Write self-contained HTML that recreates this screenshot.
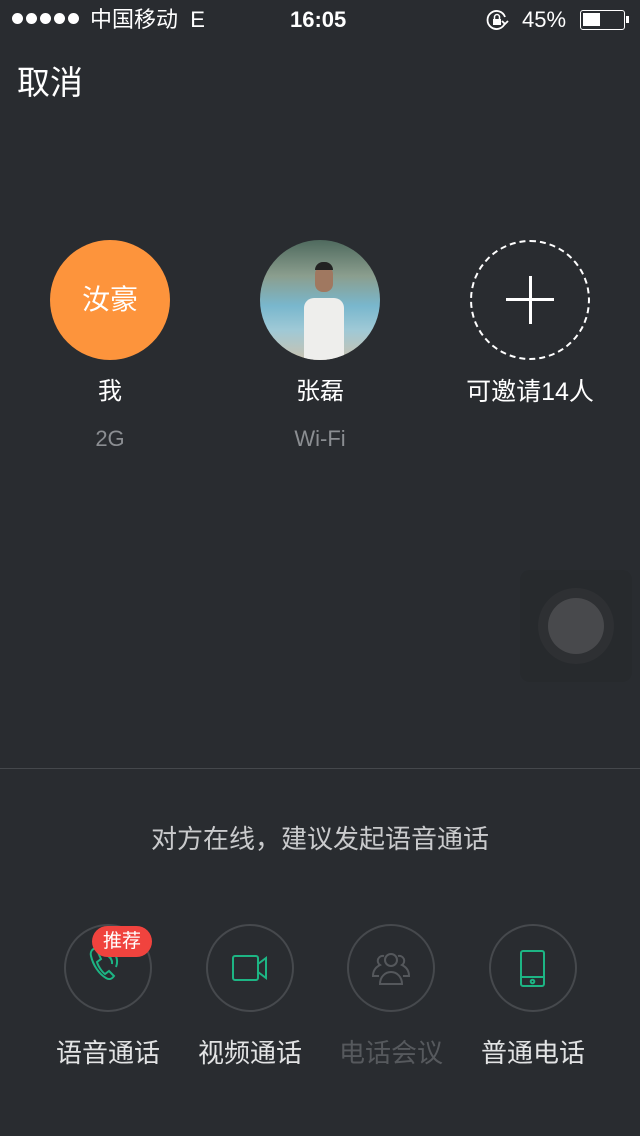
<!DOCTYPE html>
<html><head><meta charset="utf-8"><style>
*{margin:0;padding:0;box-sizing:border-box}
body{width:640px;height:1136px;background:#292c30;position:relative;overflow:hidden;font-family:"Liberation Sans","Noto Sans CJK SC",sans-serif;color:#fff}
.a{position:absolute}
.c{text-align:center}
</style></head><body>
<div class="a" style="left:12px;top:13px;display:flex;gap:3px">
<i style="width:11px;height:11px;border-radius:50%;background:#fff"></i><i style="width:11px;height:11px;border-radius:50%;background:#fff"></i><i style="width:11px;height:11px;border-radius:50%;background:#fff"></i><i style="width:11px;height:11px;border-radius:50%;background:#fff"></i><i style="width:11px;height:11px;border-radius:50%;background:#fff"></i></div>
<div class="a" style="left:90px;top:6px;font-size:22px;line-height:28px">中国移动&nbsp;&nbsp;E</div>
<div class="a" style="left:290px;top:6px;font-size:22px;line-height:28px;font-weight:bold">16:05</div>
<svg class="a" style="left:486px;top:9px" width="24" height="22" viewBox="0 0 24 22"><path d="M19 8A9 9 0 1 0 19 14" fill="none" stroke="#fff" stroke-width="1.8"/><path d="M16 12l3 3 3-3" fill="none" stroke="#fff" stroke-width="1.8"/><rect x="7" y="10" width="8" height="6" fill="#fff"/><path d="M8.5 10V8a2.5 2.5 0 0 1 5 0v2" fill="none" stroke="#fff" stroke-width="1.5"/></svg>
<div class="a" style="left:522px;top:6px;font-size:22px;line-height:28px">45%</div>
<div class="a" style="left:580px;top:10px;width:45px;height:20px;border:1.5px solid #fff;border-radius:3px"><div style="margin:2px;width:17px;height:13px;background:#fff"></div></div>
<div class="a" style="left:626px;top:16px;width:3px;height:7px;background:#fff"></div>

<div class="a" style="left:17px;top:61px;font-size:33px;line-height:44px">取消</div>

<div class="a c" style="left:50px;top:240px;width:120px;height:120px;border-radius:50%;background:#fd943c;font-size:28px;line-height:120px">汝豪</div>
<div class="a" style="left:260px;top:240px;width:120px;height:120px;border-radius:50%;overflow:hidden;background:linear-gradient(#4f6a5e 0%,#8b9e8e 30%,#79b7cd 55%,#9fc9d6 75%,#c9c2b0 100%)">
<div class="a" style="left:44px;top:58px;width:40px;height:62px;background:#eeeeec;border-radius:10px 10px 0 0"></div>
<div class="a" style="left:55px;top:26px;width:18px;height:26px;background:#a07860;border-radius:8px"></div>
<div class="a" style="left:55px;top:22px;width:18px;height:8px;background:#222;border-radius:8px 8px 0 0"></div>
</div>
<div class="a" style="left:470px;top:240px;width:120px;height:120px;border-radius:50%;border:2px dashed #fff"></div>
<div class="a" style="left:506px;top:298px;width:48px;height:3px;background:#fff"></div>
<div class="a" style="left:529px;top:276px;width:3px;height:48px;background:#fff"></div>

<div class="a c" style="left:10px;top:376px;width:200px;font-size:24px;line-height:32px">我</div>
<div class="a c" style="left:10px;top:424px;width:200px;font-size:22px;line-height:30px;color:#8b8e92">2G</div>
<div class="a c" style="left:220px;top:376px;width:200px;font-size:24px;line-height:32px">张磊</div>
<div class="a c" style="left:220px;top:424px;width:200px;font-size:22px;line-height:30px;color:#8b8e92">Wi-Fi</div>
<div class="a c" style="left:420px;top:376px;width:220px;font-size:25px;line-height:32px">可邀请14人</div>

<div class="a" style="left:520px;top:570px;width:112px;height:112px;border-radius:10px;background:#272a2d"></div>
<div class="a" style="left:538px;top:588px;width:76px;height:76px;border-radius:50%;background:#2e3033"></div>
<div class="a" style="left:548px;top:598px;width:56px;height:56px;border-radius:50%;background:#48494c"></div>

<div class="a" style="left:0;top:768px;width:640px;height:1px;background:#45484c"></div>
<div class="a c" style="left:0;top:821px;width:640px;font-size:26px;line-height:36px;color:#c9cacc">对方在线，建议发起语音通话</div>

<div class="a" style="left:64px;top:924px;width:88px;height:88px;border-radius:50%;border:2px solid #46494d"></div>
<div class="a" style="left:206px;top:924px;width:88px;height:88px;border-radius:50%;border:2px solid #46494d"></div>
<div class="a" style="left:347px;top:924px;width:88px;height:88px;border-radius:50%;border:2px solid #46494d"></div>
<div class="a" style="left:489px;top:924px;width:88px;height:88px;border-radius:50%;border:2px solid #46494d"></div>

<svg class="a" style="left:84px;top:944px" width="48" height="48" viewBox="0 0 48 48" fill="none" stroke="#1db584" stroke-width="2"><path d="M12 4c-4 1-6 4-5 8 2 9 8 18 15 22 3 2 6 1 8-2l-5-5-4 3c-3-2-7-8-8-12l4-3z"/><path d="M20 11a8 8 0 0 1 8 9"/><path d="M22 4a14 14 0 0 1 10 19"/><circle cx="26" cy="13" r="1.5" fill="#1db584" stroke="none"/></svg>
<div class="a c" style="left:92px;top:926px;width:60px;height:31px;border-radius:16px;background:#f0433e;font-size:19px;line-height:31px">推荐</div>

<svg class="a" style="left:226px;top:948px" width="48" height="40" viewBox="0 0 48 40" fill="none" stroke="#1db584" stroke-width="2"><rect x="7" y="8" width="25" height="24" rx="2"/><path d="M32 16l8-6v20l-8-6z"/></svg>
<svg class="a" style="left:367px;top:944px" width="48" height="48" viewBox="0 0 48 48" fill="none" stroke="#55585c" stroke-width="2"><circle cx="24" cy="16" r="6"/><path d="M13 40c0-7 5-12 11-12s11 5 11 12z"/><path d="M17 12a5 5 0 0 0-4 9c-4 2-7 5-7 11h6"/><path d="M31 12a5 5 0 0 1 4 9c4 2 7 5 7 11h-6"/></svg>
<svg class="a" style="left:509px;top:944px" width="48" height="48" viewBox="0 0 48 48" fill="none" stroke="#1db584" stroke-width="2"><rect x="12" y="7" width="23" height="35" rx="2"/><path d="M12 33h23"/><circle cx="23.5" cy="37.5" r="1.8"/></svg>

<div class="a c" style="left:43px;top:1035px;width:130px;font-size:26px;line-height:36px;color:#e2e3e4">语音通话</div>
<div class="a c" style="left:185px;top:1035px;width:130px;font-size:26px;line-height:36px;color:#e2e3e4">视频通话</div>
<div class="a c" style="left:326px;top:1035px;width:130px;font-size:26px;line-height:36px;color:#56595d">电话会议</div>
<div class="a c" style="left:468px;top:1035px;width:130px;font-size:26px;line-height:36px;color:#e2e3e4">普通电话</div>
</body></html>
